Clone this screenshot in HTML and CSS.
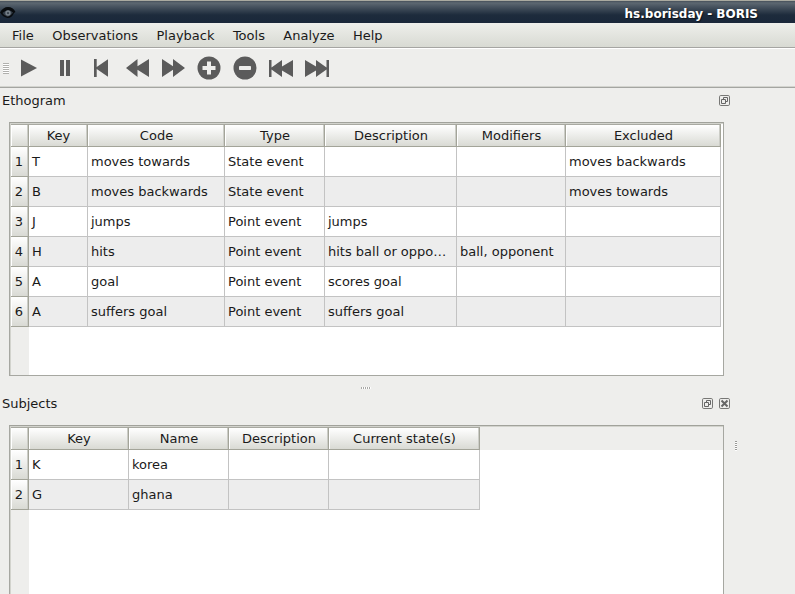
FILE: index.html
```
<!DOCTYPE html>
<html lang="en">
<head>
<meta charset="utf-8">
<title>hs.borisday - BORIS</title>
<link rel="stylesheet" href="styles.css">
</head>
<body>
<header class="titlebar">
<svg class="eye" width="16" height="14" viewBox="0 0 16 14"><path d="M0 6.5Q3 1 8 1Q13 1 15.5 6L14 7Q12 12 7.5 12Q3 11 0 6.5Z" fill="#080b0e"/><path d="M2.5 7Q8 2 13 6.5Q10 11 7 10.6Q4 10 2.5 7Z" fill="#303a45"/><circle cx="8" cy="7" r="2.7" fill="#768089"/><circle cx="8" cy="7.1" r="1.2" fill="#39434e"/></svg>
<span class="window-title">hs.borisday - BORIS</span>
</header>
<nav class="menubar"><span>File</span><span>Observations</span><span>Playback</span><span>Tools</span><span>Analyze</span><span>Help</span></nav>
<div class="toolbar">
<i class="handle"></i>
<svg viewBox="0 0 36 36"><path d="M10 9.5L26 18 10 26.5Z"/></svg>
<svg viewBox="0 0 36 36"><path d="M13 10h4v16h-4zM19 10h4v16h-4z"/></svg>
<svg viewBox="0 0 36 36"><path d="M11 9h2.7v8L25 9.3v17.4L13.7 19v8H11Z"/></svg>
<svg viewBox="0 0 36 36"><path d="M7 18L18.5 9v7.2L30 9v18l-11.5-7.2V27Z"/></svg>
<svg viewBox="0 0 36 36"><path d="M7 9l11 7.2V9l12 9-12 9v-7.2L7 27Z"/></svg>
<svg viewBox="0 0 36 36"><circle cx="18" cy="18" r="11.5"/><path class="cut" d="M16 11.5h4V16h4.5v4H20v4.5h-4V20h-4.5v-4H16z"/></svg>
<svg viewBox="0 0 36 36"><circle cx="18" cy="18" r="11.5"/><rect class="cut" x="12" y="16" width="12" height="4" rx=".8"/></svg>
<svg viewBox="0 0 36 36"><path d="M6 10h2.5v7.5L19 10v6.5L30 10v17l-11-6.5V27L8.5 19.5V27H6Z"/></svg>
<svg viewBox="0 0 36 36"><path d="M6 10l11 6.5V10l10.5 7.5V10H30v17h-2.5v-7.5L17 27v-6.5L6 27Z"/></svg>
</div>
<main class="docks">
<section class="dock">
<div class="dock-title"><h2>Ethogram</h2><svg class="float" width="11" height="11" viewBox="0 0 11 11"><rect class="outer" x=".5" y=".5" width="10" height="10" rx="1.3"/><path d="M4.5 4V2.5H8.5V6.5H7M2.5 4.5H6.5V8.5H2.5Z"/></svg></div>
<div class="frame ethogram">
<div class="row head"><b></b><span>Key</span><span>Code</span><span>Type</span><span>Description</span><span>Modifiers</span><span>Excluded</span></div>
<div class="row"><b>1</b><span>T</span><span>moves towards</span><span>State event</span><span></span><span></span><span>moves backwards</span></div>
<div class="row alt"><b>2</b><span>B</span><span>moves backwards</span><span>State event</span><span></span><span></span><span>moves towards</span></div>
<div class="row"><b>3</b><span>J</span><span>jumps</span><span>Point event</span><span>jumps</span><span></span><span></span></div>
<div class="row alt"><b>4</b><span>H</span><span>hits</span><span>Point event</span><span>hits ball or oppo…</span><span>ball, opponent</span><span></span></div>
<div class="row"><b>5</b><span>A</span><span>goal</span><span>Point event</span><span>scores goal</span><span></span><span></span></div>
<div class="row alt"><b>6</b><span>A</span><span>suffers goal</span><span>Point event</span><span>suffers goal</span><span></span><span></span></div>
</div>
</section>
<div class="splitter"><i></i></div>
<section class="dock">
<div class="dock-title"><h2>Subjects</h2><svg class="float" width="11" height="11" viewBox="0 0 11 11"><rect class="outer" x=".5" y=".5" width="10" height="10" rx="1.3"/><path d="M4.5 4V2.5H8.5V6.5H7M2.5 4.5H6.5V8.5H2.5Z"/></svg><svg width="11" height="11" viewBox="0 0 11 11"><rect class="outer" x=".5" y=".5" width="10" height="10" rx="1.3"/><path class="cross" d="M2.5 2.5L8.5 8.5M8.5 2.5L2.5 8.5"/></svg></div>
<div class="frame subjects">
<div class="row head"><b></b><span>Key</span><span>Name</span><span>Description</span><span>Current state(s)</span></div>
<div class="row"><b>1</b><span>K</span><span>korea</span><span></span><span></span></div>
<div class="row alt"><b>2</b><span>G</span><span>ghana</span><span></span><span></span></div>
</div>
</section>
</main>
<i class="side-handle"></i>
</body>
</html>
```
FILE: styles.css
```
* { box-sizing: border-box; }
html, body { height: 594px; overflow: hidden; }
body { margin: 0; background: #eeeeec; color: #1a1a1a; font: 13px/18px "DejaVu Sans", sans-serif; position: relative; }
.titlebar { height: 23px; display: flex; justify-content: space-between; align-items: center; padding-right: 37px; border-top: 1px solid #aaaaa0; background: linear-gradient(#46505a 0, #5d6871 2px, #46525e 6px, #1d2b3c 14px, #1a273a); }
.eye { display: block; margin-top: 1px; }
.window-title { color: #fff; font-weight: bold; font-size: 12px; padding-top: 4px; text-shadow: 1px 1px 1px #0008; }
.menubar { height: 25px; display: flex; gap: 18.4px; align-items: center; padding: 2px 0 0 12px; background: linear-gradient(#eeefeb, #d8dad3); border-bottom: 1px solid #a5a5a2; }
.toolbar { height: 40px; display: flex; padding-top: 2px; border-top: 1px solid #fff; border-bottom: 1px solid #a4a5a1; box-shadow: inset 0 -1px #d3d4cf; }
.toolbar svg { width: 36px; height: 36px; margin-top: -1px; fill: #5b5b5b; }
.toolbar .cut { fill: #eeeeec; }
.handle { width: 6px; height: 11px; margin: 12px 2px 0 3px; background: repeating-linear-gradient(#b0b0ad 0 1px, #fff 1px 2px); }
.docks { width: 724px; }
.dock-title { height: 34px; display: flex; gap: 6px; padding: 7px 0 0 2px; width: 730px; }
.dock-title h2 { margin: -3px 0 0; font: inherit; flex: 1; }
.dock-title svg { fill: none; stroke: #666; stroke-width: 1; }
.outer { stroke: #777775; }
.dock-title .cross { stroke-width: 2; }
.frame { margin-left: 9px; height: 254px; border: 1px solid #a6a7a1; border-top-color: #a1a29b; padding: 1px 2px 0 1px; background: linear-gradient(90deg, #eeeeec 0 19px, #fff 19px); box-shadow: inset 1px 1px #d2d3cd; }
.row { display: grid; height: 30px; }
.ethogram .row { grid-template-columns: 18px 59px 137px 100px 132px 109px 155px; width: 710px; }
.subjects .row { grid-template-columns: 18px 100px 100px 100px 151px; width: 469px; }
.row > * { border-right: 1px solid #c3c3c3; border-bottom: 1px solid #c3c3c3; font-weight: normal; white-space: nowrap; overflow: hidden; padding: 6px 0 0 3px; }
.alt { background: #ededed; }
.row.head { height: 23px; }
.row.head > *, .row > b { border-color: #a3a499; background: linear-gradient(#fff, #d9dad4); box-shadow: inset 1px 0 #fff, inset -1px 0 #cccdc7; text-align: center; padding-left: 0; }
.row.head > * { padding-top: 2px; border-top: 1px solid #a8a9a1; }
.row.head > span { padding-left: 1px; }
.row > b { padding-right: 1px; }
.splitter { height: 15px; margin-left: 361px; padding-top: 11px; }
.splitter i { display: block; width: 10px; height: 2px; background: repeating-linear-gradient(90deg, #a9a9a6 0 1px, #fff 1px 2px); }
.subjects { height: 190px; background: linear-gradient(#eeeeec 0 24px, transparent 24px), linear-gradient(90deg, #eeeeec 0 19px, #fff 19px); }
.side-handle { position: absolute; left: 735px; top: 441px; width: 2px; height: 10px; background: repeating-linear-gradient(#999996 0 1px, #fff 1px 2px); }
```
